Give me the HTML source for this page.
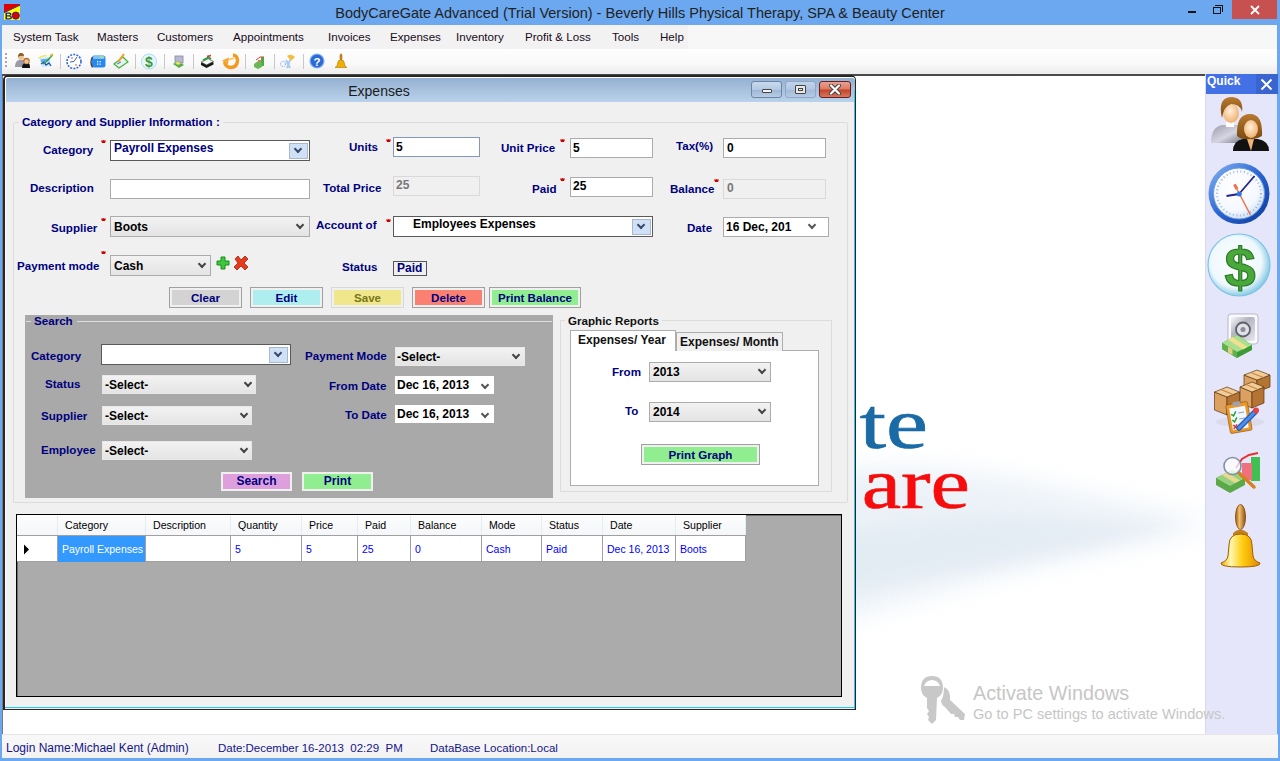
<!DOCTYPE html>
<html><head><meta charset="utf-8">
<style>
*{margin:0;padding:0;box-sizing:border-box}
html,body{width:1280px;height:761px;overflow:hidden}
body{position:relative;background:#6ba8f0;font-family:"Liberation Sans",sans-serif;}
.a{position:absolute}
.t{position:absolute;white-space:nowrap;line-height:14px;height:14px}
.lb{font-weight:bold;font-size:11.6px;color:#00007e}
.ast{position:absolute;width:5px;height:3px;background:#d00000;clip-path:polygon(0 20%,35% 20%,50% 0,65% 20%,100% 20%,80% 100%,20% 100%)}
.tb{position:absolute;background:#fff;border:1px solid #ababab}
.tbd{position:absolute;background:#f0f0f0;border:1px solid #d9d9d9}
.val{position:absolute;font-weight:bold;font-size:12px;color:#000;white-space:nowrap;line-height:14px}
.cmb{position:absolute;border:1px solid #acacac;background:linear-gradient(#f2f2f2,#e4e4e4)}
.cmbw{position:absolute;border:1px solid #5a5a5a;background:#fff}
.chev{position:absolute;width:7px;height:7px;border-right:2px solid #444;border-bottom:2px solid #444;transform:rotate(45deg)}
.dbtn{position:absolute;background:#cfe0f7;border:1px solid #a9b8cc}
.btn{position:absolute;border:1px solid #a0a0a0;padding:2px;background:#f0f0f0}
.btn>div{width:100%;height:100%;text-align:center;font-weight:bold;font-size:11.6px;color:#00007e;line-height:15px}
.menu{position:absolute;top:30px;font-size:11.6px;color:#1a0a1a;line-height:14px;white-space:nowrap}
.gh{position:absolute;top:0;height:19px;font-size:10.6px;color:#000;line-height:19px;padding-left:7px;border-right:1px solid #e4ecf4;white-space:nowrap}
.gd{position:absolute;top:0;height:26px;font-size:10.5px;color:#0000ff;line-height:26px;padding-left:4px;border-right:1px solid #a0a0a0;white-space:nowrap}
</style></head><body>

<!-- Title bar -->
<svg class="a" style="left:4px;top:4px" width="16" height="16" viewBox="0 0 16 16">
<rect width="16" height="16" fill="#ffff00"/>
<path d="M0 0H16V1L0 8.5Z" fill="#e00000"/>
<path d="M16 1.2L0 8.7" stroke="#2020a0" stroke-width="0.9"/>
<path d="M1.5 8.5V15.5H5.5Q8 15.5 8 13.5Q8 11.8 6.2 11.7Q7.5 11.3 7.5 10Q7.5 8.5 5.3 8.5Z M3 9.8H5Q6 9.8 6 10.6Q6 11.2 5 11.2H3Z M3 12.5H5.3Q6.5 12.5 6.5 13.4Q6.5 14.3 5.3 14.3H3Z" fill="#2020a0" fill-rule="evenodd"/>
<circle cx="11.8" cy="11.6" r="3.6" fill="#e00000" stroke="#2020a0" stroke-width="0.9"/>
</svg>
<div class="t" style="left:0;width:1280px;top:5px;text-align:center;font-size:14.5px;color:#222;line-height:16px;height:16px">BodyCareGate Advanced (Trial Version) - Beverly Hills Physical Therapy, SPA &amp; Beauty Center</div>
<div class="a" style="left:1188px;top:11px;width:8px;height:2px;background:#111"></div>
<div class="a" style="left:1213px;top:7px;width:8px;height:7px;border:1.5px solid #111"></div>
<div class="a" style="left:1215px;top:5px;width:8px;height:7px;border-top:1.5px solid #111;border-right:1.5px solid #111"></div>
<div class="a" style="left:1232px;top:0;width:45px;height:19px;background:#c75050"></div>
<svg class="a" style="left:1250px;top:5px" width="10" height="10"><path d="M1 1L9 9M9 1L1 9" stroke="#fff" stroke-width="1.8"/></svg>

<!-- App frame -->
<div class="a" style="left:2px;top:25px;width:1275px;height:733px;background:#fff"></div>
<!-- Menu -->
<div class="a" style="left:2px;top:25px;width:1275px;height:24px;background:#f7f7f7"></div>
<div class="a" style="left:2px;top:25px;width:686px;height:24px;background:#f2f2f2"></div>
<div class="menu" style="left:13px">System Task</div>
<div class="menu" style="left:97px">Masters</div>
<div class="menu" style="left:157px">Customers</div>
<div class="menu" style="left:233px">Appointments</div>
<div class="menu" style="left:328px">Invoices</div>
<div class="menu" style="left:390px">Expenses</div>
<div class="menu" style="left:456px">Inventory</div>
<div class="menu" style="left:525px">Profit &amp; Loss</div>
<div class="menu" style="left:612px">Tools</div>
<div class="menu" style="left:660px">Help</div>
<!-- Toolbar -->
<div class="a" style="left:2px;top:49px;width:1275px;height:25px;background:linear-gradient(#fefefe,#f9f9f9 60%,#ececec)"></div>
<div class="a" style="left:2px;top:74px;width:1275px;height:2px;background:#4a4a4a"></div>

<!-- MDI client -->
<div class="a" style="left:2px;top:76px;width:1203px;height:658px;background:#fff;border-left:1px solid #7a7a7a"></div>

<!-- Quick panel -->
<div class="a" style="left:1205px;top:74px;width:72px;height:661px;background:#e6e6fa;border-left:1px solid #d8d8e8"></div>
<div class="a" style="left:1206px;top:74px;width:72px;height:20px;background:#4470e6"></div>
<div class="a" style="left:1256px;top:74px;width:22px;height:20px;background:#3a64d0"></div>
<div class="t" style="left:1207px;top:74px;font-size:12px;font-weight:bold;color:#fff">Quick</div>
<svg class="a" style="left:1260px;top:78px" width="13" height="13"><path d="M1.5 1.5L11.5 11.5M11.5 1.5L1.5 11.5" stroke="#fff" stroke-width="2"/></svg>

<!-- Status bar -->
<div class="a" style="left:2px;top:734px;width:1276px;height:24px;background:linear-gradient(#f8f8f8,#f2f2f2);border-top:1px solid #e6e6e6"></div>
<div class="t" style="left:6px;top:741px;font-size:12px;color:#14148a">Login Name:Michael Kent (Admin)</div>
<div class="t" style="left:218px;top:741px;font-size:11.5px;color:#14148a">Date:December 16-2013&nbsp; 02:29&nbsp; PM</div>
<div class="t" style="left:430px;top:741px;font-size:11.5px;color:#14148a">DataBase Location:Local</div>

<!-- Toolbar icons -->
<svg class="a" style="left:0;top:49px" width="360" height="25" viewBox="0 49 360 25">
<g fill="#a8a8a8"><rect x="5" y="53" width="2" height="2"/><rect x="5" y="57" width="2" height="2"/><rect x="5" y="61" width="2" height="2"/><rect x="5" y="65" width="2" height="2"/></g>
<g fill="#c8c8c8"><rect x="60" y="54" width="1" height="15"/><rect x="135" y="54" width="1" height="15"/><rect x="164" y="54" width="1" height="15"/><rect x="193" y="54" width="1" height="15"/><rect x="245" y="54" width="1" height="15"/><rect x="274" y="54" width="1" height="15"/><rect x="303" y="54" width="1" height="15"/></g>
<!-- 1 people -->
<path d="M15 67 Q15 61 19 60 L24 60 Q26 61 26 67 Z" fill="#9a9aa8"/>
<circle cx="21" cy="57" r="3" fill="#f0c090"/><path d="M18 57 Q18 53 21 53 Q24 53 24 56 Q21 55 18 57Z" fill="#8a5a20"/>
<path d="M22 68 Q22 63 26 63 L28 63 Q30 63 30 68 Z" fill="#111"/>
<circle cx="26.5" cy="61" r="3.2" fill="#b07028"/><circle cx="26.5" cy="61.5" r="2.2" fill="#f0c090"/>
<!-- 2 -->
<path d="M38.5 58.5 Q42 55 47 56" stroke="#f0e860" stroke-width="1.4" fill="none"/>
<path d="M40 58 L49 57 L51 66 L42 67 Z" fill="#cfe6fb"/>
<path d="M40.5 59.5 L49 58.5 L49.5 61 L41 62 Z" fill="#58b0f0"/>
<path d="M41 64 L44 62 L46 65 L49 63 L51 66" stroke="#2050c0" stroke-width="1.3" fill="none"/>
<path d="M43 64 L47 61 L52.5 55" stroke="#30a040" stroke-width="1.5" fill="none"/>
<path d="M50 56 L53 54" stroke="#d8c030" stroke-width="1.6"/>
<!-- 3 clock -->
<circle cx="74" cy="61.5" r="7" fill="#fff" stroke="#3a6ad8" stroke-width="1.6" stroke-dasharray="2 1.2"/>
<path d="M74 61.5 L70 62 M74 61.5 L77 57" stroke="#4060c0" stroke-width="1"/><circle cx="76" cy="65" r="0.8" fill="#e04040"/><circle cx="72" cy="58" r="0.8" fill="#e04040"/>
<!-- 4 phone -->
<rect x="92" y="55.5" width="13.5" height="12" rx="2.5" fill="#2a88ec"/>
<rect x="93" y="56" width="11.5" height="3" rx="1" fill="#7cc4ff"/>
<rect x="100" y="56.3" width="3.5" height="1.6" fill="#b8e070"/>
<g fill="#e8f4ff"><rect x="97" y="61" width="1.3" height="1.3"/><rect x="99.5" y="61" width="1.3" height="1.3"/><rect x="97" y="63.5" width="1.3" height="1.3"/><rect x="99.5" y="63.5" width="1.3" height="1.3"/></g>
<path d="M92.5 57 Q89.5 62 92.5 67.5" stroke="#3a3a3a" stroke-width="1.4" fill="none"/>
<!-- 5 -->
<path d="M114 64 L123 57 L128 62 L119 68 Z" fill="#e8f4e8" stroke="#40b040" stroke-width="1.2"/>
<path d="M118 62 L124 54" stroke="#f0a020" stroke-width="2"/><path d="M117 64 L121 62" stroke="#4a8ad8" stroke-width="1.2"/>
<!-- 6 dollar -->
<circle cx="149" cy="61.5" r="7.5" fill="#e8f6fc" stroke="#a8dcf0" stroke-width="1"/>
<text x="149" y="67" text-anchor="middle" font-family="Liberation Sans" font-weight="bold" font-size="14" fill="#3a9a3a">$</text>
<!-- 7 safe -->
<rect x="175" y="56" width="8" height="7" fill="#b8b8d0" stroke="#8888a8" stroke-width="0.8"/>
<path d="M173 64 L178 61 L184 65 L179 68 Z" fill="#58b048"/><path d="M175 63 L178 61.5 L181 63.5 L178 65Z" fill="#f0e070"/>
<!-- 8 money -->
<path d="M201 63 L208 59.5 L213.5 62.5 L213.5 64.5 L206.5 68 L201 65 Z" fill="#1a1a1a"/>
<path d="M201 62 L208 58.5 L213.5 61.5 L206.5 65 Z" fill="#f4f4f4" stroke="#333" stroke-width="0.6"/>
<path d="M203 60.5 L208.5 57.5 L211 59" stroke="#30a040" stroke-width="2" fill="none"/>
<path d="M207 56.5 L211 55.5" stroke="#e03030" stroke-width="1.6"/>
<!-- 9 orange arrows -->
<path d="M224.5 62 Q225.5 67.5 231 67.5 Q237.5 67 237.5 60 Q237 55.5 233 55" stroke="#f39a1e" stroke-width="3.4" fill="none"/>
<path d="M222 60.5 L229 57.5 L228 64.5 Z" fill="#f6a830"/>
<path d="M229 60 Q231 58 234 58.5" stroke="#f8c050" stroke-width="1.5" fill="none"/>
<!-- 10 chart -->
<rect x="261" y="57" width="3" height="9" fill="#40b040"/><rect x="258" y="60" width="3" height="6" fill="#f07070"/>
<path d="M254 64 L258 61 L262 63 L262 67 L258 69 L254 67Z" fill="#68b858"/><path d="M256 60 L260 57 L264 57" stroke="#e04040" stroke-width="1" fill="none"/>
<!-- 11 -->
<path d="M287 56 Q291 53 295 57 L291 61 Z" fill="#f0c040"/>
<path d="M286 60 L290 68 M290 60 L287 68" stroke="#a8c8f0" stroke-width="2"/>
<circle cx="283" cy="64" r="2.5" fill="none" stroke="#6a9ae8" stroke-width="1" stroke-dasharray="1 1"/>
<!-- 12 help -->
<circle cx="317" cy="61" r="7" fill="#2a6ad8" stroke="#88b0f0" stroke-width="1.2"/>
<text x="317" y="65.5" text-anchor="middle" font-family="Liberation Sans" font-weight="bold" font-size="11.5" fill="#fff">?</text>
<!-- 13 bell -->
<ellipse cx="341" cy="57" rx="1.4" ry="3.6" fill="#c08020"/>
<path d="M338 62 Q338 60 341 60 Q344 60 344 62 L345 66 L347 67.5 L335 67.5 L337 66 Z" fill="#f0b000" stroke="#b07000" stroke-width="0.6"/>
</svg>

<!-- Background logo remnants -->
<svg class="a" style="left:856px;top:300px" width="349" height="400" viewBox="856 300 349 400">
<defs><filter id="blur1" x="-20%" y="-50%" width="140%" height="200%"><feGaussianBlur stdDeviation="14"/></filter>
<filter id="blur2" x="-20%" y="-50%" width="140%" height="200%"><feGaussianBlur stdDeviation="8"/></filter></defs>
<path d="M820 470 Q960 462 1080 495 Q1160 512 1215 525 Q1120 545 1020 568 Q930 592 820 625 Z" fill="#d8e4f0" opacity="0.5" filter="url(#blur1)"/>
<path d="M835 535 Q950 515 1060 522 Q1130 526 1185 522 Q1100 550 1000 566 Q920 580 835 595 Z" fill="#d2dfec" opacity="0.3" filter="url(#blur2)"/>
</svg>
<div class="a" style="left:0;width:928px;top:374px;height:100px;line-height:100px;text-align:right;white-space:nowrap;font-family:'Liberation Serif',serif;font-size:71px;color:#1a6aa6;-webkit-text-stroke:0.7px #1a6aa6;transform:scaleX(1.33);transform-origin:100% 50%">te</div>
<div class="a" style="left:0;width:970px;top:434px;height:100px;line-height:100px;text-align:right;white-space:nowrap;font-family:'Liberation Serif',serif;font-size:71px;color:#f60c0c;-webkit-text-stroke:0.6px #f60c0c;transform:scaleX(1.25);transform-origin:100% 50%">are</div>

<!-- Activate Windows -->
<svg class="a" style="left:918px;top:675px" width="50" height="50" viewBox="0 0 50 50">
<path d="M3 13 Q3 1 14 1 Q25 1 25 13 Q25 20 19 23 L18 45 L14 49 L10 45 L11 42 L9 39 L11 36 L9 33 L9 23 Q3 20 3 13 Z" fill="#c8c8c8"/>
<path d="M6 11 Q8 5 14 5 Q20 5 22 11 Z" fill="#fff"/>
<path d="M26 12 Q33 15 32 25 L47 39 L46 45 L42 45 L40 42 L37 42 L36 39 L33 39 L27 32 Q24 31 23 26 Q26 21 26 12 Z" fill="#c8c8c8"/>
</svg>
<div class="t" style="left:973px;top:682px;height:22px;line-height:22px;font-size:19.8px;color:#c6c6c6">Activate Windows</div>
<div class="t" style="left:973px;top:705px;height:18px;line-height:18px;font-size:14.6px;color:#c6c6c6">Go to PC settings to activate Windows.</div>

<!-- CHILD WINDOW -->
<div class="a" style="left:3px;top:75px;width:853px;height:635px;background:#f0f0f0;border:1px solid #262626;border-left-width:2px;border-top-width:2px;border-radius:5px 5px 0 0;"></div>
<div class="a" style="left:5px;top:77px;width:850px;height:25px;background:linear-gradient(#95b1d2,#bad2eb);border-radius:3px 3px 0 0;border-top:1px solid #fff;border-left:1px solid #fff"></div>
<div class="t" style="left:5px;width:748px;top:83px;text-align:center;font-size:14px;color:#1a1a1a;line-height:16px;height:16px">Expenses</div>

<!-- child title buttons -->
<div class="a" style="left:751px;top:81px;width:31px;height:17px;border:1px solid #6d84a3;border-radius:3px;background:linear-gradient(#c9daee 0%,#b3c8e2 50%,#9db5d4 51%,#b7cde6 100%)"></div>
<div class="a" style="left:762px;top:89px;width:10px;height:4px;background:#f4f4f4;border:1px solid #444;border-radius:1px"></div>
<div class="a" style="left:785px;top:81px;width:31px;height:17px;border:1px solid #8fa6c4;border-radius:3px;background:linear-gradient(#c1d4ea 0%,#b0c6e0 50%,#a2b9d6 51%,#b5cbe4 100%)"></div>
<div class="a" style="left:795px;top:85px;width:11px;height:9px;background:#e8e8e8;border:1px solid #444;border-radius:1px"></div>
<div class="a" style="left:798px;top:88px;width:5px;height:3px;border:1px solid #444"></div>
<div class="a" style="left:819px;top:81px;width:32px;height:17px;border:1px solid #6a2020;border-radius:3px;background:linear-gradient(#eaa090 0%,#dc7a62 48%,#c0432a 52%,#d8765c 100%)"></div>
<svg class="a" style="left:829px;top:84px" width="12" height="11"><path d="M2 1.5L10 9.5M10 1.5L2 9.5" stroke="#444" stroke-width="4" stroke-linecap="round"/><path d="M2 1.5L10 9.5M10 1.5L2 9.5" stroke="#fff" stroke-width="2.2" stroke-linecap="round"/></svg>
<!-- right/bottom cyan edge -->
<div class="a" style="left:854px;top:90px;width:1px;height:619px;background:#28c8f0"></div>
<div class="a" style="left:5px;top:707px;width:850px;height:1px;background:#28c8f0"></div>
<div class="a" style="left:5px;top:102px;width:1px;height:605px;background:#fafcff"></div>

<!-- Group box 1 -->
<div class="a" style="left:13px;top:122px;width:835px;height:381px;border:1px solid #dcdcdc;border-radius:2px"></div>
<div class="t lb" style="left:19px;top:115px;padding:0 3px;background:#f0f0f0">Category and Supplier Information :</div>

<!-- Row 1 -->
<div class="t lb" style="left:43px;top:143px">Category</div>
<div class="ast" style="left:101px;top:140px"></div>
<div class="cmbw" style="left:110px;top:140px;width:200px;height:21px"></div>
<div class="val" style="left:114px;top:141px;color:#00007e">Payroll Expenses</div>
<div class="dbtn" style="left:289px;top:143px;width:19px;height:16px"></div>
<div class="chev" style="left:295px;top:146px;width:6px;height:6px;border-color:#3a4a6a"></div>

<div class="t lb" style="left:349px;top:140px">Units</div>
<div class="ast" style="left:386px;top:139px"></div>
<div class="tb" style="left:393px;top:137px;width:87px;height:20px;border-color:#8497b4"></div>
<div class="val" style="left:396px;top:140px">5</div>

<div class="t lb" style="left:501px;top:141px">Unit Price</div>
<div class="ast" style="left:560px;top:139px"></div>
<div class="tb" style="left:570px;top:138px;width:83px;height:20px"></div>
<div class="val" style="left:573px;top:141px">5</div>

<div class="t lb" style="left:676px;top:139px">Tax(%)</div>
<div class="tb" style="left:723px;top:138px;width:103px;height:20px"></div>
<div class="val" style="left:727px;top:141px">0</div>

<!-- Row 2 -->
<div class="t lb" style="left:30px;top:181px">Description</div>
<div class="tb" style="left:110px;top:179px;width:200px;height:20px"></div>

<div class="t lb" style="left:323px;top:181px">Total Price</div>
<div class="tbd" style="left:393px;top:176px;width:87px;height:20px"></div>
<div class="val" style="left:396px;top:178px;color:#777">25</div>

<div class="t lb" style="left:532px;top:182px">Paid</div>
<div class="ast" style="left:560px;top:178px"></div>
<div class="tb" style="left:570px;top:177px;width:83px;height:20px"></div>
<div class="val" style="left:573px;top:179px">25</div>

<div class="t lb" style="left:670px;top:182px">Balance</div>
<div class="ast" style="left:714px;top:179px"></div>
<div class="tbd" style="left:723px;top:179px;width:103px;height:20px"></div>
<div class="val" style="left:727px;top:181px;color:#777">0</div>

<!-- Row 3 -->
<div class="t lb" style="left:51px;top:221px">Supplier</div>
<div class="ast" style="left:101px;top:218px"></div>
<div class="cmb" style="left:110px;top:216px;width:200px;height:21px"></div>
<div class="val" style="left:114px;top:220px">Boots</div>
<div class="chev" style="left:297px;top:222px;width:6px;height:6px"></div>

<div class="t lb" style="left:316px;top:218px">Account of</div>
<div class="ast" style="left:386px;top:219px"></div>
<div class="cmbw" style="left:393px;top:216px;width:260px;height:21px"></div>
<div class="val" style="left:413px;top:217px">Employees Expenses</div>
<div class="dbtn" style="left:632px;top:219px;width:19px;height:16px"></div>
<div class="chev" style="left:638px;top:222px;width:6px;height:6px;border-color:#3a4a6a"></div>

<div class="t lb" style="left:687px;top:221px">Date</div>
<div class="tb" style="left:723px;top:217px;width:106px;height:20px"></div>
<div class="val" style="left:726px;top:220px">16 Dec, 201</div>
<div class="chev" style="left:809px;top:222px;width:6px;height:6px;border-color:#555"></div>

<!-- Row 4 -->
<div class="t lb" style="left:17px;top:259px">Payment mode</div>
<div class="ast" style="left:101px;top:251px"></div>
<div class="cmb" style="left:110px;top:255px;width:101px;height:21px"></div>
<div class="val" style="left:114px;top:259px">Cash</div>
<div class="chev" style="left:199px;top:261px;width:6px;height:6px"></div>
<svg class="a" style="left:216px;top:256px" width="15" height="15"><path d="M5 1h4v4h4v4h-4v4h-4v-4h-4v-4h4z" fill="#3cc83c" stroke="#1e8a1e" stroke-width="1"/></svg>
<svg class="a" style="left:233px;top:255px" width="16" height="16"><path d="M2 4L5 1L8 5L12 1L15 4L11 8L15 12L12 15L8 11L4 15L1 12L5 8z" fill="#e83a1a" stroke="#a02010" stroke-width="0.8"/></svg>

<div class="t lb" style="left:342px;top:260px">Status</div>
<div class="a" style="left:393px;top:261px;width:34px;height:15px;border:1px solid #555"></div>
<div class="t lb" style="left:397px;top:261px;font-size:12px">Paid</div>

<!-- Buttons -->
<div class="btn" style="left:169px;top:287px;width:73px;height:21px"><div style="background:#d3d3d3">Clear</div></div>
<div class="btn" style="left:250px;top:287px;width:73px;height:21px"><div style="background:#afeeee">Edit</div></div>
<div class="btn" style="left:331px;top:287px;width:73px;height:21px;border-color:#d8d8d8"><div style="background:#f0e68c;color:#77771a">Save</div></div>
<div class="btn" style="left:412px;top:287px;width:73px;height:21px"><div style="background:#fa8072">Delete</div></div>
<div class="btn" style="left:489px;top:287px;width:92px;height:21px"><div style="background:#90ee90">Print Balance</div></div>

<!-- Search group -->
<div class="a" style="left:25px;top:315px;width:528px;height:183px;background:#a9a9a9"></div>
<div class="a" style="left:26px;top:321px;width:526px;height:1px;background:#dedede"></div>
<div class="a" style="left:31px;top:316px;width:46px;height:11px;background:#a9a9a9"></div><div class="t lb" style="left:31px;top:314px;padding:0 3px">Search</div>

<div class="t lb" style="left:31px;top:349px">Category</div>
<div class="cmbw" style="left:101px;top:344px;width:190px;height:21px"></div>
<div class="dbtn" style="left:269px;top:347px;width:19px;height:16px"></div>
<div class="chev" style="left:275px;top:350px;width:6px;height:6px;border-color:#3a4a6a"></div>

<div class="t lb" style="left:45px;top:377px">Status</div>
<div class="cmb" style="left:102px;top:375px;width:154px;height:19px;border-color:#e8e8e8"></div>
<div class="val" style="left:105px;top:378px">-Select-</div>
<div class="chev" style="left:245px;top:380px;width:6px;height:6px"></div>

<div class="t lb" style="left:41px;top:409px">Supplier</div>
<div class="cmb" style="left:102px;top:406px;width:150px;height:19px;border-color:#e8e8e8"></div>
<div class="val" style="left:105px;top:409px">-Select-</div>
<div class="chev" style="left:241px;top:411px;width:6px;height:6px"></div>

<div class="t lb" style="left:41px;top:443px">Employee</div>
<div class="cmb" style="left:102px;top:441px;width:150px;height:19px;border-color:#e8e8e8"></div>
<div class="val" style="left:105px;top:444px">-Select-</div>
<div class="chev" style="left:241px;top:446px;width:6px;height:6px"></div>

<div class="t lb" style="left:305px;top:349px">Payment Mode</div>
<div class="cmb" style="left:395px;top:347px;width:130px;height:19px;border-color:#e8e8e8"></div>
<div class="val" style="left:397px;top:350px">-Select-</div>
<div class="chev" style="left:513px;top:352px;width:6px;height:6px"></div>

<div class="t lb" style="left:329px;top:379px">From Date</div>
<div class="a" style="left:395px;top:376px;width:99px;height:18px;background:#fff"></div>
<div class="val" style="left:397px;top:378px">Dec 16, 2013</div>
<div class="chev" style="left:482px;top:382px;width:6px;height:6px;border-color:#555"></div>

<div class="t lb" style="left:345px;top:408px">To Date</div>
<div class="a" style="left:395px;top:405px;width:99px;height:18px;background:#fff"></div>
<div class="val" style="left:397px;top:407px">Dec 16, 2013</div>
<div class="chev" style="left:482px;top:411px;width:6px;height:6px;border-color:#555"></div>

<div class="a" style="left:221px;top:472px;width:71px;height:19px;border:2px solid #efefef;background:#dda0dd"></div>
<div class="t lb" style="left:221px;width:71px;top:474px;text-align:center;font-size:12px">Search</div>
<div class="a" style="left:302px;top:472px;width:71px;height:19px;border:2px solid #efefef;background:#90ee90"></div>
<div class="t lb" style="left:302px;width:71px;top:474px;text-align:center;font-size:12px">Print</div>

<!-- Graphic reports -->
<div class="a" style="left:560px;top:320px;width:272px;height:172px;border:1px solid #dcdcdc"></div>
<div class="t lb" style="left:565px;top:314px;padding:0 3px;background:#f0f0f0;color:#111">Graphic Reports</div>
<div class="a" style="left:570px;top:350px;width:249px;height:136px;background:#fff;border:1px solid #adadad"></div>
<div class="a" style="left:676px;top:332px;width:107px;height:19px;background:#f0f0f0;border:1px solid #adadad;border-bottom:none"></div>
<div class="a" style="left:570px;top:330px;width:106px;height:21px;background:#fff;border:1px solid #adadad;border-bottom:none"></div>
<div class="t lb" style="left:578px;top:333px;color:#111;font-size:12px">Expenses/ Year</div>
<div class="t lb" style="left:680px;top:335px;color:#111;font-size:12px">Expenses/ Month</div>
<div class="t lb" style="left:612px;top:365px">From</div>
<div class="cmb" style="left:649px;top:362px;width:122px;height:20px"></div>
<div class="val" style="left:653px;top:365px">2013</div>
<div class="chev" style="left:759px;top:367px;width:6px;height:6px"></div>
<div class="t lb" style="left:625px;top:404px">To</div>
<div class="cmb" style="left:649px;top:402px;width:122px;height:20px"></div>
<div class="val" style="left:653px;top:405px">2014</div>
<div class="chev" style="left:759px;top:407px;width:6px;height:6px"></div>
<div class="btn" style="left:641px;top:444px;width:119px;height:21px"><div style="background:#90ee90">Print Graph</div></div>

<!-- Grid -->
<div class="a" style="left:16px;top:514px;width:826px;height:183px;background:#ababab;border:1px solid #000;box-shadow:inset 0.5px 0.5px 0 #333"></div>
<div class="a" style="left:17px;top:515px;width:729px;height:21px;background:linear-gradient(#fdfdfd,#f4f6f9)"></div>
<div class="a" style="left:17px;top:535px;width:729px;height:27px;background:#fff;border-top:1px solid #a0a0a0;border-bottom:1px solid #a0a0a0"></div>
<div class="a" style="left:18px;top:516px;width:729px;height:21px">
<div class="gh" style="left:0px;width:40px"></div>
<div class="gh" style="left:40px;width:88px">Category</div>
<div class="gh" style="left:128px;width:85px">Description</div>
<div class="gh" style="left:213px;width:71px">Quantity</div>
<div class="gh" style="left:284px;width:56px">Price</div>
<div class="gh" style="left:340px;width:53px">Paid</div>
<div class="gh" style="left:393px;width:71px">Balance</div>
<div class="gh" style="left:464px;width:60px">Mode</div>
<div class="gh" style="left:524px;width:61px">Status</div>
<div class="gh" style="left:585px;width:73px">Date</div>
<div class="gh" style="left:658px;width:70px">Supplier</div>
</div>
<div class="a" style="left:18px;top:536px;width:729px;height:26px">
<div class="gd" style="left:0px;width:40px;color:#000;"></div>
<div class="gd" style="left:40px;width:88px;background:#3399ff;color:#fff;">Payroll Expenses</div>
<div class="gd" style="left:128px;width:85px;"></div>
<div class="gd" style="left:213px;width:71px;">5</div>
<div class="gd" style="left:284px;width:56px;">5</div>
<div class="gd" style="left:340px;width:53px;">25</div>
<div class="gd" style="left:393px;width:71px;">0</div>
<div class="gd" style="left:464px;width:60px;">Cash</div>
<div class="gd" style="left:524px;width:61px;">Paid</div>
<div class="gd" style="left:585px;width:73px;">Dec 16, 2013</div>
<div class="gd" style="left:658px;width:70px;">Boots</div>
</div>
<svg class="a" style="left:23px;top:544px" width="7" height="11"><path d="M1 0.5L6 5.5L1 10.5z" fill="#000"/></svg>

<!-- Quick panel icons -->
<svg class="a" style="left:1205px;top:90px" width="72" height="490" viewBox="1205 90 72 490">
<defs>
<linearGradient id="gbody" x1="0" y1="0" x2="1" y2="1"><stop offset="0" stop-color="#9a9aac"/><stop offset="0.55" stop-color="#d6d6e2"/><stop offset="1" stop-color="#70707e"/></linearGradient>
<radialGradient id="gface" cx="0.45" cy="0.4" r="0.6"><stop offset="0" stop-color="#fff0dc"/><stop offset="1" stop-color="#f0b070"/></radialGradient>
<linearGradient id="ghair" x1="0" y1="0" x2="0" y2="1"><stop offset="0" stop-color="#b87a30"/><stop offset="1" stop-color="#7a4a10"/></linearGradient>
<linearGradient id="gring" x1="0" y1="0" x2="1" y2="1"><stop offset="0" stop-color="#8ab8f8"/><stop offset="0.5" stop-color="#2a64d0"/><stop offset="1" stop-color="#0a3a9a"/></linearGradient>
<radialGradient id="gclk" cx="0.4" cy="0.35" r="0.7"><stop offset="0" stop-color="#ffffff"/><stop offset="0.7" stop-color="#f4f8ff"/><stop offset="1" stop-color="#c8dcf4"/></radialGradient>
<radialGradient id="gbub" cx="0.45" cy="0.45" r="0.55"><stop offset="0" stop-color="#ffffff"/><stop offset="0.75" stop-color="#eef8fc"/><stop offset="1" stop-color="#8ccce8"/></radialGradient>
<linearGradient id="gsafe" x1="0" y1="0" x2="1" y2="1"><stop offset="0" stop-color="#f8f8fc"/><stop offset="0.4" stop-color="#b4b4c0"/><stop offset="1" stop-color="#e8e8f0"/></linearGradient>
<linearGradient id="gbox" x1="0" y1="0" x2="0" y2="1"><stop offset="0" stop-color="#e8b880"/><stop offset="1" stop-color="#b07838"/></linearGradient>
<linearGradient id="gbell" x1="0" y1="0" x2="1" y2="0"><stop offset="0" stop-color="#f0a800"/><stop offset="0.25" stop-color="#fff8b0"/><stop offset="0.55" stop-color="#ffcc10"/><stop offset="1" stop-color="#e08800"/></linearGradient>
<linearGradient id="ghandle" x1="0" y1="0" x2="1" y2="0"><stop offset="0" stop-color="#a06010"/><stop offset="0.4" stop-color="#f0c070"/><stop offset="1" stop-color="#905010"/></linearGradient>
</defs>
<!-- people -->
<path d="M1211 143 Q1211 127 1222 125 L1240 125 Q1244 127 1244 135 L1244 143 Z" fill="url(#gbody)"/>
<rect x="1226" y="122" width="8" height="5" fill="#fff"/>
<ellipse cx="1231" cy="113" rx="8" ry="10" fill="url(#gface)"/>
<path d="M1221 113 Q1219 97 1232 97 Q1244 98 1242 112 Q1240 104 1231 104 Q1224 106 1222 118 Z" fill="url(#ghair)"/>
<path d="M1233 151 Q1233 141 1243 139 L1258 139 Q1269 141 1269 151 Z" fill="#111"/>
<path d="M1247 139 L1254 139 L1251 151 Z" fill="#f0b478"/>
<path d="M1237 136 Q1236 114 1250 114 Q1263 114 1262 136 Q1256 140 1250 139 Q1242 140 1237 136 Z" fill="url(#ghair)"/>
<ellipse cx="1251" cy="129" rx="7" ry="9" fill="url(#gface)"/>
<!-- clock -->
<circle cx="1239" cy="193.5" r="30.5" fill="url(#gring)"/>
<circle cx="1239" cy="193.5" r="25.5" fill="url(#gclk)" stroke="#6a9ae0" stroke-width="1"/>
<circle cx="1239" cy="193.5" r="22" fill="none" stroke="#9ab4d8" stroke-width="2" stroke-dasharray="1 2.6"/>
<path d="M1239 194 L1226.5 196" stroke="#22228a" stroke-width="2.2"/>
<path d="M1239 194 L1254.5 176" stroke="#22228a" stroke-width="1.8"/>
<path d="M1234.5 184.5 L1250.5 215" stroke="#f07050" stroke-width="1.5"/>
<path d="M1234.5 184.5 L1237 189" stroke="#f07050" stroke-width="3"/>
<circle cx="1239.3" cy="194" r="2.5" fill="#2a7ae0"/>
<!-- dollar bubble -->
<circle cx="1239" cy="265" r="31" fill="url(#gbub)" stroke="#7cc4e4" stroke-width="1.2"/>
<text x="1240" y="287" text-anchor="middle" font-family="Liberation Sans" font-weight="bold" font-size="56" fill="#4aa83a" stroke="#2a7a2a" stroke-width="1.2">$</text>
<!-- safe -->
<rect x="1228" y="314" width="30" height="30" rx="3" fill="#fafafe" stroke="#b8b8c8" stroke-width="1"/>
<rect x="1231" y="317" width="24" height="24" rx="2" fill="url(#gsafe)"/>
<circle cx="1243" cy="329.5" r="7" fill="#e0e0e8" stroke="#60606c" stroke-width="1.8"/>
<circle cx="1243" cy="329.5" r="2.5" fill="#8a8a98"/>
<path d="M1222 343 L1237 335 L1252 345 L1252 350 L1237 358 L1222 349 Z" fill="#3a9a38"/>
<path d="M1222 343 L1237 335 L1252 345 L1237 352 Z" fill="#a8e090"/>
<path d="M1228 339.5 L1232.5 337 L1247.5 347 L1243 349.5 Z" fill="#f0e090"/>
<path d="M1222 343 L1237 352 L1237 358 L1222 349 Z" fill="#60b050"/>
<path d="M1228 346.5 L1232.5 349.2 L1232.5 355 L1228 352.5 Z" fill="#e0d080"/>
<!-- boxes -->
<ellipse cx="1240" cy="422" rx="24" ry="5" fill="#d0d0e0" opacity="0.5"/><path d="M1244 375 L1257 380 L1257 392 L1244 387 Z" fill="#dca060" stroke="#5a3510" stroke-width="0.7"/><path d="M1257 380 L1270 375 L1270 387 L1257 392 Z" fill="#b47434" stroke="#5a3510" stroke-width="0.7"/><path d="M1257 370 L1270 375 L1257 380 L1244 375 Z" fill="#f2cc94" stroke="#5a3510" stroke-width="0.7"/><path d="M1250.5 372.5 L1263.5 377.5" stroke="#c08848" stroke-width="1.2"/><path d="M1240 387 L1252 392 L1252 408 L1240 403 Z" fill="#dca060" stroke="#5a3510" stroke-width="0.7"/><path d="M1252 392 L1264 387 L1264 403 L1252 408 Z" fill="#b47434" stroke="#5a3510" stroke-width="0.7"/><path d="M1252 382 L1264 387 L1252 392 L1240 387 Z" fill="#f2cc94" stroke="#5a3510" stroke-width="0.7"/><path d="M1246.0 384.5 L1258.0 389.5" stroke="#c08848" stroke-width="1.2"/><path d="M1214.5 392 L1227 397 L1227 415 L1214.5 410 Z" fill="#dca060" stroke="#5a3510" stroke-width="0.7"/><path d="M1227 397 L1239.5 392 L1239.5 410 L1227 415 Z" fill="#b47434" stroke="#5a3510" stroke-width="0.7"/><path d="M1227 387 L1239.5 392 L1227 397 L1214.5 392 Z" fill="#f2cc94" stroke="#5a3510" stroke-width="0.7"/><path d="M1220.75 389.5 L1233.25 394.5" stroke="#c08848" stroke-width="1.2"/>
<g transform="rotate(-10 1239 418)"><rect x="1228" y="403" width="22" height="29" rx="1.5" fill="#e89a28" stroke="#8a5010" stroke-width="0.6"/>
<rect x="1231" y="407" width="16" height="22" fill="#f2f6ff"/><rect x="1235" y="401.5" width="8" height="4" rx="1" fill="#a0a0b0"/>
<path d="M1232 413 l2 2 l3 -4 M1232 419 l2 2 l3 -4" stroke="#30a030" stroke-width="1.5" fill="none"/>
<path d="M1232 424 l4 4 M1236 424 l-4 4" stroke="#e03030" stroke-width="1.4"/>
<path d="M1239 413h6M1239 419h6" stroke="#8aa0d0" stroke-width="1"/></g>
<path d="M1239 428 L1255 412" stroke="#2a5ab8" stroke-width="5.5" stroke-linecap="round"/>
<path d="M1239 428 L1255 412" stroke="#4a90e8" stroke-width="3" stroke-linecap="round"/>
<circle cx="1256" cy="410.5" r="3" fill="#e84040"/>
<!-- chart -->
<rect x="1251" y="457" width="9" height="24" fill="#40c050"/>
<rect x="1242" y="463" width="10" height="17" fill="#f07080"/>
<path d="M1236 468 L1242 459 L1249 455 L1258 453" stroke="#e83030" stroke-width="2" fill="none"/>
<path d="M1216 478 L1232 470 L1245 478 L1245 485 L1230 493 L1216 485 Z" fill="#5aa848"/>
<path d="M1216 478 L1232 470 L1245 478 L1230 486 Z" fill="#98d080"/>
<path d="M1222 475 L1227 472.5 L1240 480.5 L1235 483 Z" fill="#e8d890"/>
<path d="M1238 472 L1254 487" stroke="#d88020" stroke-width="3.5" stroke-linecap="round"/>
<circle cx="1232.5" cy="466" r="8.5" fill="rgba(255,255,255,0.75)" stroke="#8090a8" stroke-width="1.6"/>
<!-- bell -->
<ellipse cx="1240.5" cy="517" rx="5" ry="12.5" fill="url(#ghandle)" stroke="#804000" stroke-width="0.8"/>
<path d="M1233 533 Q1240 526 1248 533 L1248 537 L1233 537 Z" fill="#c08020"/>
<path d="M1229 545 Q1229 534 1240.5 534 Q1252 534 1252 545 L1253 556 Q1254 561 1260 563 Q1261 567 1240.5 567 Q1220 567 1221 563 Q1227 561 1228 556 Z" fill="url(#gbell)" stroke="#a06000" stroke-width="1"/>
</svg>

</body></html>
